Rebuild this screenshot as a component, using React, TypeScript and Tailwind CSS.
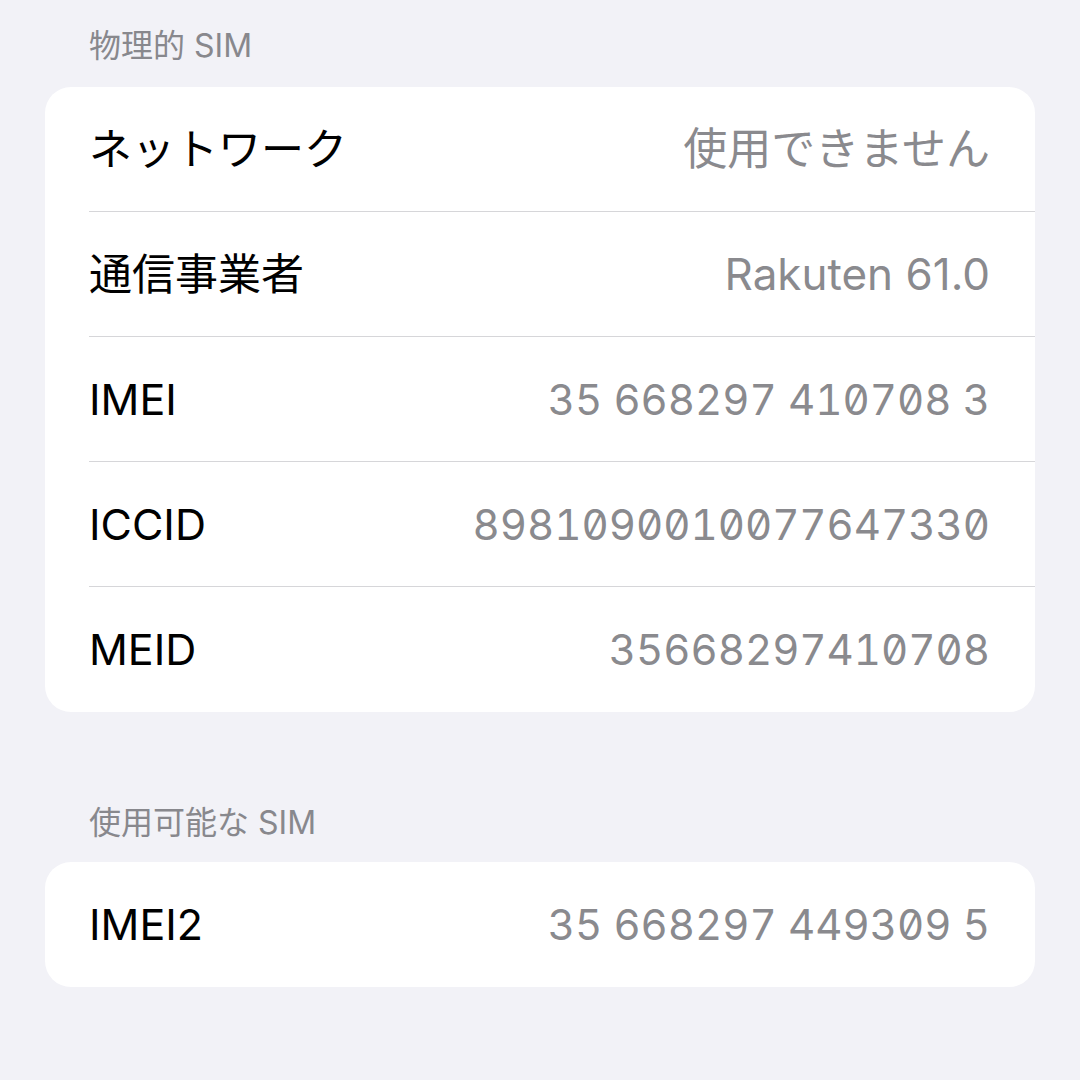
const font = "font-['Inter','Noto_Sans_CJK_JP',sans-serif]";

type Row = { label: string; value: string; mono?: boolean };

const physical: Row[] = [
  { label: "ネットワーク", value: "使用できません" },
  { label: "通信事業者", value: "Rakuten 61.0" },
  { label: "IMEI", value: "35 668297 410708 3", mono: true },
  { label: "ICCID", value: "8981090010077647330", mono: true },
  { label: "MEID", value: "35668297410708", mono: true },
];

const available: Row[] = [{ label: "IMEI2", value: "35 668297 449309 5", mono: true }];

const SectionHeader = ({ title, className }: { title: string; className?: string }) => (
  <div className={`h-[40px] pl-[44px] text-[32px] leading-[40px] text-[#88888d] ${className ?? ""}`}>
    {title}
  </div>
);

const Card = ({ rows }: { rows: Row[] }) => (
  <div className="rounded-[26px] bg-white overflow-hidden">
    {rows.map((row, i) => (
      <div key={row.label} className="pl-[44px]">
        <div
          className={`flex h-[125px] items-center justify-between pr-[45px] ${
            i < rows.length - 1 ? "border-b border-[#d6d6d9]" : ""
          }`}
        >
          <span className="text-[43px] text-black">{row.label}</span>
          <span
            className={`text-[#8a8a8e] ${
              row.mono ? "text-[42px] tabular-nums slashed-zero" : "text-[44px]"
            }`}
          >
            {row.value}
          </span>
        </div>
      </div>
    ))}
  </div>
);

export default function App() {
  return (
    <div className={`h-[1080px] w-[1080px] bg-[#f2f2f7] px-[45px] pt-[26px] ${font}`}>
      <SectionHeader title="物理的 SIM" />
      <div className="mt-[21px]">
        <Card rows={physical} />
      </div>
      <SectionHeader title="使用可能な SIM" className="mt-[91px]" />
      <div className="mt-[19px]">
        <Card rows={available} />
      </div>
    </div>
  );
}
